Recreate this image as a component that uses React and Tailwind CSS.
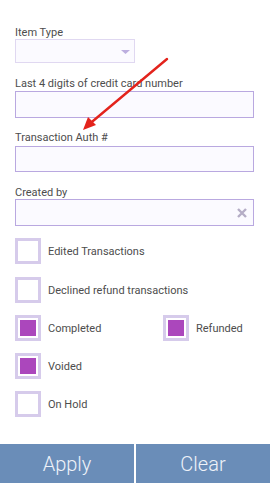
import React from "react";

const font = { fontFamily: "Roboto, 'Noto Sans', sans-serif" };

function Label({ children, className = "" }) {
  return (
    <div className={"h-[13px] text-[11px] leading-[13px] text-[#4d4d4d] " + className}>
      {children}
    </div>
  );
}

function Box({ checked }) {
  return (
    <div className="w-[26px] h-[26px] border-[3px] border-[#d6cbeb] bg-white flex items-center justify-center shrink-0">
      {checked && <div className="w-[16px] h-[16px] bg-[#ab47bc]" />}
    </div>
  );
}

function Check({ checked, label }) {
  return (
    <div className="flex items-center h-[26px]">
      <Box checked={checked} />
      <span className="ml-[7px] mt-[2px] text-[11px] text-[#4d4d4d]">{label}</span>
    </div>
  );
}

export default function App() {
  return (
    <div className="relative w-[270px] h-[483px] bg-white flex flex-col overflow-hidden" style={font}>
      <div className="flex flex-col pl-[15px] pr-[16px] pt-[26px]">
        <Label>Item Type</Label>
        <div className="w-[120px] h-[24px] border border-[#e0d8f1] bg-[#fbfaff] flex items-center justify-end pr-[4px]">
          <svg width="9" height="4" viewBox="0 0 9 4" className="mt-[1px]">
            <polygon points="0,0 9,0 4.5,4" fill="#bcaedf" />
          </svg>
        </div>

        <Label className="mt-[14px]">Last 4 digits of credit card number</Label>
        <div className="mt-[1px] h-[27px] border border-[#b9a8e0] bg-[#fbfaff]" />

        <Label className="mt-[13px]">Transaction Auth #</Label>
        <div className="mt-[2px] h-[26px] border border-[#b9a8e0] bg-[#fbfaff]" />

        <Label className="mt-[14px]">Created by</Label>
        <div className="mt-[0px] h-[27px] border border-[#b9a8e0] bg-[#fbfaff] flex items-center justify-end pr-[6px]">
          <svg width="10" height="10" viewBox="0 0 10 10">
            <path d="M1 1 L9 9 M9 1 L1 9" stroke="#b5adc6" strokeWidth="2.4" strokeLinecap="butt" />
          </svg>
        </div>

        <div className="mt-[12px]">
          <Check label="Edited Transactions" />
        </div>
        <div className="mt-[13px]">
          <Check label="Declined refund transactions" />
        </div>
        <div className="mt-[12px] flex">
          <div className="w-[148px]">
            <Check checked label="Completed" />
          </div>
          <Check checked label="Refunded" />
        </div>
        <div className="mt-[12px]">
          <Check checked label="Voided" />
        </div>
        <div className="mt-[12px]">
          <Check label="On Hold" />
        </div>
      </div>

      <div className="mt-auto flex h-[39px]">
        <button className="w-[134px] h-full bg-[#6a8db8] text-[#eef2f8] text-[20px] font-light">
          Apply
        </button>
        <div className="w-[2px] bg-white" />
        <button className="flex-1 h-full bg-[#6a8db8] text-[#eef2f8] text-[20px] font-light">
          Clear
        </button>
      </div>

      <svg
        className="absolute left-0 top-0 pointer-events-none"
        width="270"
        height="483"
        viewBox="0 0 270 483"
      >
        <line x1="167" y1="59" x2="87" y2="126" stroke="#e3231c" strokeWidth="2.4" strokeLinecap="round" />
        <polygon points="83,130 88,117 96,125" fill="#e3231c" />
      </svg>
    </div>
  );
}
